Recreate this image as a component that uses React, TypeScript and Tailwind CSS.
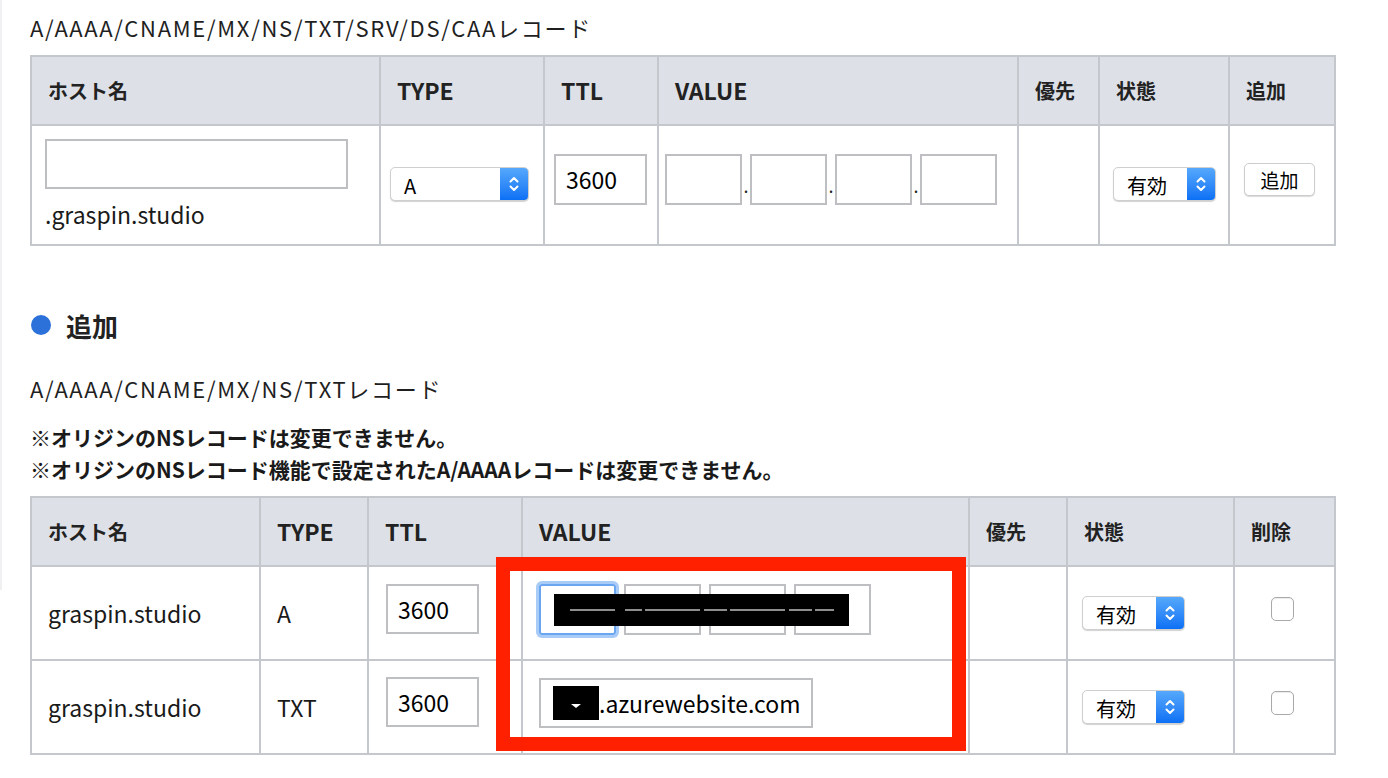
import React from 'react'

const Chevrons = () => (
  <svg width="12" height="20" viewBox="0 0 12 20" fill="none" stroke="white" strokeWidth="2" strokeLinecap="round" strokeLinejoin="round">
    <path d="M2.5 7.5 L6 4 L9.5 7.5" />
    <path d="M2.5 12.5 L6 16 L9.5 12.5" />
  </svg>
)

const Select: React.FC<{ label: string; w: string }> = ({ label, w }) => (
  <div className={`flex h-[34px] ${w} overflow-hidden rounded-[5px] border border-[#cfcfcf] bg-white shadow-[0_1px_1px_rgba(0,0,0,0.18)]`}>
    <div className="flex flex-1 items-center pl-[13px] pt-[3px] text-[20px] leading-none text-black">{label}</div>
    <div className="flex w-[28px] items-center justify-center bg-linear-to-b from-[#55a8fb] to-[#0a70f5]">
      <Chevrons />
    </div>
  </div>
)

const Box: React.FC<{ w: string; h?: string; focus?: boolean; children?: React.ReactNode }> = ({ w, h = 'h-[50px]', focus, children }) => (
  <div
    className={`flex ${w} ${h} shrink-0 items-center border-2 pl-[10px] text-[23px] text-black ${
      focus ? 'rounded-[3px] border-[#6aa5ef] shadow-[0_0_0_3px_#a9cbf7]' : 'border-[#bdbfc3]'
    }`}
  >
    {children}
  </div>
)

const IpInputs: React.FC<{ focusFirst?: boolean }> = ({ focusFirst }) => (
  <div className="flex items-center">
    <Box w="w-[77px]" h="h-[51px]" focus={focusFirst} />
    <span className="w-[8px] pt-[10px] text-center text-[18px] leading-none">.</span>
    <Box w="w-[77px]" h="h-[51px]" />
    <span className="w-[8px] pt-[10px] text-center text-[18px] leading-none">.</span>
    <Box w="w-[77px]" h="h-[51px]" />
    <span className="w-[8px] pt-[10px] text-center text-[18px] leading-none">.</span>
    <Box w="w-[77px]" h="h-[51px]" />
  </div>
)

const Checkbox = () => (
  <div className="h-[24px] w-[23px] rounded-[5px] border border-[#a9a9a9] bg-white shadow-[inset_0_1px_1px_rgba(0,0,0,0.08)]" />
)

const thBase = 'h-[69px] border-2 border-[#c4c7cb] bg-[#dde1e7] pl-[16px] text-left align-middle font-bold text-[#222]'
const thJ = `${thBase} text-[20px]`
const thL = `${thBase} text-[23px]`
const td = 'border-2 border-[#c4c7cb] align-top'
const tdText = 'border-2 border-[#c4c7cb] align-middle pl-[16px] text-[23px] text-[#1a1a1a]'

const App: React.FC = () => {
  return (
    <div className="flex h-[778px] w-[1388px] overflow-hidden bg-white font-['Noto_Sans_CJK_JP',sans-serif] text-[#1f1f1f]">
      <div className="h-[590px] w-[2px] shrink-0 bg-[#f0f0f3]" />
      <div className="pl-[28px]">
        <div className="flex h-[55px] items-center text-[22px] tracking-[1.7px]">A/AAAA/CNAME/MX/NS/TXT/SRV/DS/CAAレコード</div>

        <table className="w-[1304px] table-fixed border-collapse">
          <colgroup>
            <col className="w-[349px]" />
            <col className="w-[164px]" />
            <col className="w-[114px]" />
            <col className="w-[360px]" />
            <col className="w-[81px]" />
            <col className="w-[130px]" />
            <col className="w-[106px]" />
          </colgroup>
          <thead>
            <tr>
              <th className={thJ}>ホスト名</th>
              <th className={thL}>TYPE</th>
              <th className={thL}>TTL</th>
              <th className={thL}>VALUE</th>
              <th className={thJ}>優先</th>
              <th className={thJ}>状態</th>
              <th className={thJ}>追加</th>
            </tr>
          </thead>
          <tbody>
            <tr className="h-[120px]">
              <td className={`${td} pl-[13px] pt-[13px]`}>
                <div className="h-[50px] w-[303px] border-2 border-[#bdbfc3]" />
                <div className="mt-[11px] text-[23px] leading-[28px] text-[#1a1a1a]">.graspin.studio</div>
              </td>
              <td className={`${td} pl-[9px] pt-[41px]`}>
                <Select label="A" w="w-[139px]" />
              </td>
              <td className={`${td} pl-[9px] pt-[28px]`}>
                <Box w="w-[93px]" h="h-[51px]">3600</Box>
              </td>
              <td className={`${td} pl-[6px] pt-[28px]`}>
                <IpInputs />
              </td>
              <td className={td} />
              <td className={`${td} pl-[13px] pt-[41px]`}>
                <Select label="有効" w="w-[103px]" />
              </td>
              <td className={`${td} pl-[14px] pt-[37px]`}>
                <button className="flex h-[33px] w-[71px] items-center justify-center rounded-[5px] border border-[#cdcdcd] bg-white pt-[2px] text-[19px] text-black shadow-[0_1px_1px_rgba(0,0,0,0.15)]">
                  追加
                </button>
              </td>
            </tr>
          </tbody>
        </table>

        <div className="mt-[59px] flex h-[40px] items-center">
          <div className="ml-[1px] h-[20px] w-[20px] rounded-full bg-[#2c71d9]" />
          <div className="ml-[15px] text-[26px] font-bold text-[#222]">追加</div>
        </div>

        <div className="mt-[27px] flex h-[32px] items-center text-[22px] tracking-[1.7px]">A/AAAA/CNAME/MX/NS/TXTレコード</div>

        <div className="mt-[17px] text-[21px] font-bold leading-[32px] text-[#1a1a1a]">
          <div>※オリジンのNSレコードは変更できません。</div>
          <div>※オリジンのNSレコード機能で設定されたA/AAAAレコードは変更できません。</div>
        </div>

        <div className="relative mt-[11px]">
          <table className="w-[1304px] table-fixed border-collapse">
            <colgroup>
              <col className="w-[229px]" />
              <col className="w-[108px]" />
              <col className="w-[154px]" />
              <col className="w-[447px]" />
              <col className="w-[98px]" />
              <col className="w-[167px]" />
              <col className="w-[101px]" />
            </colgroup>
            <thead>
              <tr>
                <th className={thJ}>ホスト名</th>
                <th className={thL}>TYPE</th>
                <th className={thL}>TTL</th>
                <th className={thL}>VALUE</th>
                <th className={thJ}>優先</th>
                <th className={thJ}>状態</th>
                <th className={thJ}>削除</th>
              </tr>
            </thead>
            <tbody>
              <tr className="h-[94px]">
                <td className={tdText}>graspin.studio</td>
                <td className={tdText}>A</td>
                <td className={`${td} pl-[17px] pt-[17px]`}>
                  <Box w="w-[93px]">3600</Box>
                </td>
                <td className={`${td} relative pl-[16px] pt-[17px]`}>
                  <IpInputs focusFirst />
                  <div className="absolute left-[31px] top-[27px] flex h-[32px] w-[295px] items-center bg-black">
                    <svg width="295" height="4" viewBox="0 0 295 4">
                      <g stroke="#8e8e8e" strokeWidth="2">
                        <line x1="16" y1="2" x2="61" y2="2" />
                        <line x1="71" y1="2" x2="88" y2="2" />
                        <line x1="91" y1="2" x2="146" y2="2" />
                        <line x1="150" y1="2" x2="173" y2="2" />
                        <line x1="176" y1="2" x2="231" y2="2" />
                        <line x1="235" y1="2" x2="258" y2="2" />
                        <line x1="261" y1="2" x2="280" y2="2" />
                      </g>
                    </svg>
                  </div>
                </td>
                <td className={td} />
                <td className={`${td} pl-[14px] pt-[29px]`}>
                  <Select label="有効" w="w-[103px]" />
                </td>
                <td className={`${td} pl-[36px] pt-[30px]`}>
                  <Checkbox />
                </td>
              </tr>
              <tr className="h-[94px]">
                <td className={tdText}>graspin.studio</td>
                <td className={tdText}>TXT</td>
                <td className={`${td} pl-[17px] pt-[16px]`}>
                  <Box w="w-[93px]">3600</Box>
                </td>
                <td className={`${td} pl-[16px] pt-[17px]`}>
                  <div className="flex h-[50px] w-[274px] items-center border-2 border-[#bdbfc3] pl-[12px] text-[23px] text-black">
                    <div className="flex h-[34px] w-[46px] shrink-0 items-center justify-center bg-black pt-[6px]">
                      <svg width="12" height="6" viewBox="0 0 12 6">
                        <path d="M1 1 L6 5 L11 1 Z" fill="white" />
                      </svg>
                    </div>
                    <span>.azurewebsite.com</span>
                  </div>
                </td>
                <td className={td} />
                <td className={`${td} pl-[14px] pt-[29px]`}>
                  <Select label="有効" w="w-[103px]" />
                </td>
                <td className={`${td} pl-[36px] pt-[30px]`}>
                  <Checkbox />
                </td>
              </tr>
            </tbody>
          </table>
          <div className="absolute left-[466px] top-[61px] h-[194px] w-[470px] border-[14px] border-[#ff2000]" />
        </div>
      </div>
    </div>
  )
}

export default App
